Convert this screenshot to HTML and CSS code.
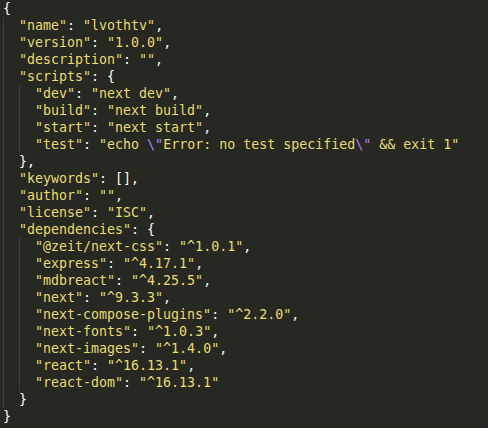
FILE: index.html
```html
<!DOCTYPE html>
<html>
<head>
<meta charset="utf-8">
<link rel="stylesheet" href="styles.css">
</head>
<body>
<div class="code">
<div class="ln"><span class="p">{</span></div>
<div class="ln"><span class="g"></span><span class="s">"name"</span><span class="p">: </span><span class="s">"lvothtv"</span><span class="p">,</span></div>
<div class="ln"><span class="g"></span><span class="s">"version"</span><span class="p">: </span><span class="s">"1.0.0"</span><span class="p">,</span></div>
<div class="ln"><span class="g"></span><span class="s">"description"</span><span class="p">: </span><span class="s">""</span><span class="p">,</span></div>
<div class="ln"><span class="g"></span><span class="s">"scripts"</span><span class="p">: {</span></div>
<div class="ln"><span class="g"></span><span class="g"></span><span class="s">"dev"</span><span class="p">: </span><span class="s">"next dev"</span><span class="p">,</span></div>
<div class="ln"><span class="g"></span><span class="g"></span><span class="s">"build"</span><span class="p">: </span><span class="s">"next build"</span><span class="p">,</span></div>
<div class="ln"><span class="g"></span><span class="g"></span><span class="s">"start"</span><span class="p">: </span><span class="s">"next start"</span><span class="p">,</span></div>
<div class="ln"><span class="g"></span><span class="g"></span><span class="s">"test"</span><span class="p">: </span><span class="s">"echo <span class="e">\"</span>Error: no test specified<span class="e">\"</span> &amp;&amp; exit 1"</span></div>
<div class="ln"><span class="g"></span><span class="p">},</span></div>
<div class="ln"><span class="g"></span><span class="s">"keywords"</span><span class="p">: [],</span></div>
<div class="ln"><span class="g"></span><span class="s">"author"</span><span class="p">: </span><span class="s">""</span><span class="p">,</span></div>
<div class="ln"><span class="g"></span><span class="s">"license"</span><span class="p">: </span><span class="s">"ISC"</span><span class="p">,</span></div>
<div class="ln"><span class="g"></span><span class="s">"dependencies"</span><span class="p">: {</span></div>
<div class="ln"><span class="g"></span><span class="g"></span><span class="s">"@zeit/next-css"</span><span class="p">: </span><span class="s">"^1.0.1"</span><span class="p">,</span></div>
<div class="ln"><span class="g"></span><span class="g"></span><span class="s">"express"</span><span class="p">: </span><span class="s">"^4.17.1"</span><span class="p">,</span></div>
<div class="ln"><span class="g"></span><span class="g"></span><span class="s">"mdbreact"</span><span class="p">: </span><span class="s">"^4.25.5"</span><span class="p">,</span></div>
<div class="ln"><span class="g"></span><span class="g"></span><span class="s">"next"</span><span class="p">: </span><span class="s">"^9.3.3"</span><span class="p">,</span></div>
<div class="ln"><span class="g"></span><span class="g"></span><span class="s">"next-compose-plugins"</span><span class="p">: </span><span class="s">"^2.2.0"</span><span class="p">,</span></div>
<div class="ln"><span class="g"></span><span class="g"></span><span class="s">"next-fonts"</span><span class="p">: </span><span class="s">"^1.0.3"</span><span class="p">,</span></div>
<div class="ln"><span class="g"></span><span class="g"></span><span class="s">"next-images"</span><span class="p">: </span><span class="s">"^1.4.0"</span><span class="p">,</span></div>
<div class="ln"><span class="g"></span><span class="g"></span><span class="s">"react"</span><span class="p">: </span><span class="s">"^16.13.1"</span><span class="p">,</span></div>
<div class="ln"><span class="g"></span><span class="g"></span><span class="s">"react-dom"</span><span class="p">: </span><span class="s">"^16.13.1"</span></div>
<div class="ln"><span class="g"></span><span class="p">}</span></div>
<div class="ln"><span class="p">}</span></div>
</div>
</body>
</html>
```
FILE: styles.css
```css
html, body {
  margin: 0;
  padding: 0;
  background: #272822;
  height: 100%;
}
.code {
  padding: 0 0 0 3px;
  font-family: "DejaVu Sans Mono", monospace;
  font-size: 13.3px;
  line-height: 17px;
  color: #f8f8f2;
}
.ln {
  height: 17px;
  white-space: pre;
}
.g {
  display: inline-block;
  width: 16px;
  height: 17px;
  vertical-align: top;
  box-shadow: inset 1px 0 0 #3e3f38;
}
.s { color: #e6db74; }
.p { color: #f8f8f2; }
.e { color: #ae81ff; }
```
